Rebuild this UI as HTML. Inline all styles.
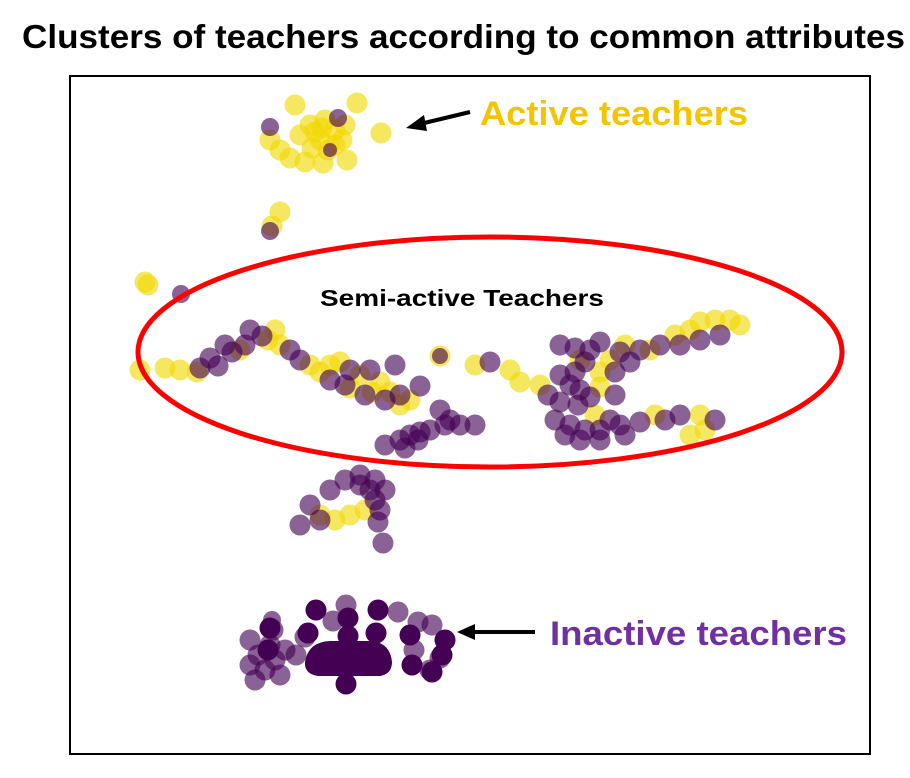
<!DOCTYPE html>
<html><head><meta charset="utf-8"><style>
html,body{margin:0;padding:0;background:#fff;width:910px;height:778px;overflow:hidden;font-family:"Liberation Sans",sans-serif}
</style></head><body>
<svg width="910" height="778" xmlns="http://www.w3.org/2000/svg">
<text x="22" y="48" textLength="883" lengthAdjust="spacingAndGlyphs" font-family="Liberation Sans, sans-serif" font-weight="bold" font-size="33" fill="#000">Clusters of teachers according to common attributes</text>
<rect x="70" y="76" width="800" height="678" fill="none" stroke="#000" stroke-width="2"/>
<g fill-opacity="0.62">
<g fill="#f0d800">
<circle cx="295" cy="105" r="10.5"/><circle cx="357" cy="103" r="10.5"/><circle cx="270" cy="140" r="10.5"/><circle cx="280" cy="150" r="10.5"/><circle cx="290" cy="158" r="10.5"/><circle cx="305" cy="162" r="10.5"/><circle cx="323" cy="163" r="10.5"/><circle cx="347" cy="160" r="10.5"/><circle cx="381" cy="133" r="10.5"/><circle cx="310" cy="125" r="10.5"/><circle cx="325" cy="120" r="10.5"/><circle cx="335" cy="130" r="10.5"/><circle cx="320" cy="140" r="10.5"/><circle cx="335" cy="145" r="10.5"/><circle cx="300" cy="135" r="10.5"/><circle cx="345" cy="125" r="10.5"/><circle cx="315" cy="132" r="10.5"/><circle cx="328" cy="150" r="10.5"/><circle cx="312" cy="148" r="10.5"/><circle cx="342" cy="140" r="10.5"/><circle cx="322" cy="128" r="10.5"/>
<circle cx="280" cy="212" r="10.5"/><circle cx="272" cy="226" r="10.5"/><circle cx="145" cy="282" r="10.5"/><circle cx="148" cy="285" r="10.5"/>
<circle cx="140" cy="370" r="10.5"/><circle cx="165" cy="368" r="10.5"/><circle cx="180" cy="370" r="10.5"/><circle cx="197" cy="372" r="10.5"/><circle cx="275" cy="330" r="10.5"/><circle cx="280" cy="345" r="10.5"/><circle cx="310" cy="365" r="10.5"/><circle cx="320" cy="372" r="10.5"/><circle cx="330" cy="365" r="10.5"/><circle cx="340" cy="362" r="10.5"/><circle cx="360" cy="375" r="10.5"/><circle cx="380" cy="382" r="10.5"/><circle cx="390" cy="392" r="10.5"/><circle cx="410" cy="400" r="10.5"/><circle cx="400" cy="405" r="10.5"/><circle cx="350" cy="388" r="10.5"/><circle cx="268" cy="340" r="10.5"/><circle cx="372" cy="392" r="10.5"/><circle cx="240" cy="350" r="10.5"/>
<circle cx="440" cy="356" r="10.5"/><circle cx="475" cy="365" r="10.5"/><circle cx="510" cy="370" r="10.5"/><circle cx="520" cy="382" r="10.5"/><circle cx="540" cy="385" r="10.5"/>
<circle cx="610" cy="360" r="10.5"/><circle cx="625" cy="345" r="10.5"/><circle cx="650" cy="350" r="10.5"/><circle cx="675" cy="335" r="10.5"/><circle cx="690" cy="330" r="10.5"/><circle cx="700" cy="322" r="10.5"/><circle cx="715" cy="320" r="10.5"/><circle cx="730" cy="320" r="10.5"/><circle cx="740" cy="325" r="10.5"/><circle cx="600" cy="372" r="10.5"/><circle cx="600" cy="387" r="10.5"/><circle cx="655" cy="415" r="10.5"/><circle cx="700" cy="415" r="10.5"/><circle cx="690" cy="435" r="10.5"/><circle cx="705" cy="430" r="10.5"/><circle cx="595" cy="415" r="10.5"/><circle cx="580" cy="360" r="10.5"/>
<circle cx="365" cy="510" r="10.5"/><circle cx="350" cy="515" r="10.5"/><circle cx="335" cy="520" r="10.5"/><circle cx="320" cy="515" r="10.5"/>
</g>
<g fill="#440154">
<circle cx="270" cy="127" r="9"/><circle cx="338" cy="118" r="9"/><circle cx="270" cy="231" r="9"/><circle cx="181" cy="294" r="9"/><circle cx="330" cy="150" r="7"/>
<circle cx="200" cy="368" r="10.5"/><circle cx="210" cy="358" r="10.5"/><circle cx="218" cy="366" r="10.5"/><circle cx="232" cy="352" r="10.5"/><circle cx="245" cy="345" r="10.5"/><circle cx="250" cy="330" r="10.5"/><circle cx="262" cy="336" r="10.5"/><circle cx="290" cy="350" r="10.5"/><circle cx="300" cy="360" r="10.5"/><circle cx="350" cy="370" r="10.5"/><circle cx="345" cy="385" r="10.5"/><circle cx="330" cy="380" r="10.5"/><circle cx="370" cy="370" r="10.5"/><circle cx="395" cy="365" r="10.5"/><circle cx="400" cy="395" r="10.5"/><circle cx="420" cy="386" r="10.5"/><circle cx="365" cy="395" r="10.5"/><circle cx="225" cy="345" r="10.5"/><circle cx="385" cy="400" r="10.5"/>
<circle cx="385" cy="445" r="10.5"/><circle cx="400" cy="440" r="10.5"/><circle cx="410" cy="435" r="10.5"/><circle cx="420" cy="432" r="10.5"/><circle cx="430" cy="430" r="10.5"/><circle cx="445" cy="425" r="10.5"/><circle cx="460" cy="425" r="10.5"/><circle cx="475" cy="425" r="10.5"/><circle cx="440" cy="410" r="10.5"/><circle cx="450" cy="420" r="10.5"/><circle cx="405" cy="448" r="10.5"/><circle cx="418" cy="440" r="10.5"/>
<circle cx="440" cy="356" r="8"/><circle cx="490" cy="362" r="10.5"/><circle cx="548" cy="395" r="10.5"/>
<circle cx="560" cy="345" r="10.5"/><circle cx="575" cy="348" r="10.5"/><circle cx="590" cy="350" r="10.5"/><circle cx="600" cy="342" r="10.5"/><circle cx="640" cy="350" r="10.5"/><circle cx="660" cy="345" r="10.5"/><circle cx="680" cy="345" r="10.5"/><circle cx="700" cy="340" r="10.5"/><circle cx="720" cy="335" r="10.5"/><circle cx="630" cy="362" r="10.5"/><circle cx="615" cy="372" r="10.5"/><circle cx="585" cy="362" r="10.5"/><circle cx="620" cy="352" r="10.5"/>
<circle cx="560" cy="375" r="10.5"/><circle cx="570" cy="385" r="10.5"/><circle cx="580" cy="390" r="10.5"/><circle cx="590" cy="397" r="10.5"/><circle cx="615" cy="395" r="10.5"/><circle cx="560" cy="402" r="10.5"/><circle cx="575" cy="372" r="10.5"/><circle cx="578" cy="405" r="10.5"/>
<circle cx="555" cy="420" r="10.5"/><circle cx="570" cy="425" r="10.5"/><circle cx="585" cy="430" r="10.5"/><circle cx="600" cy="430" r="10.5"/><circle cx="620" cy="425" r="10.5"/><circle cx="640" cy="422" r="10.5"/><circle cx="665" cy="420" r="10.5"/><circle cx="680" cy="415" r="10.5"/><circle cx="715" cy="420" r="10.5"/><circle cx="600" cy="440" r="10.5"/><circle cx="580" cy="440" r="10.5"/><circle cx="565" cy="435" r="10.5"/><circle cx="625" cy="435" r="10.5"/><circle cx="610" cy="420" r="10.5"/>
<circle cx="330" cy="490" r="10.5"/><circle cx="345" cy="480" r="10.5"/><circle cx="360" cy="485" r="10.5"/><circle cx="375" cy="480" r="10.5"/><circle cx="385" cy="490" r="10.5"/><circle cx="375" cy="500" r="10.5"/><circle cx="380" cy="510" r="10.5"/><circle cx="310" cy="505" r="10.5"/><circle cx="300" cy="525" r="10.5"/><circle cx="320" cy="520" r="10.5"/><circle cx="378" cy="522" r="10.5"/><circle cx="383" cy="543" r="10.5"/><circle cx="360" cy="475" r="10.5"/><circle cx="370" cy="490" r="10.5"/>
<circle cx="250" cy="640" r="10.5"/><circle cx="258" cy="655" r="10.5"/><circle cx="250" cy="665" r="10.5"/><circle cx="265" cy="670" r="10.5"/><circle cx="275" cy="660" r="10.5"/><circle cx="270" cy="645" r="10.5"/><circle cx="285" cy="650" r="10.5"/><circle cx="273" cy="630" r="10.5"/><circle cx="272" cy="620" r="9"/><circle cx="255" cy="680" r="10.5"/><circle cx="280" cy="675" r="10.5"/>
<circle cx="346" cy="605" r="10.5"/><circle cx="398" cy="612" r="10.5"/><circle cx="333" cy="621" r="10.5"/><circle cx="418" cy="622" r="10.5"/><circle cx="432" cy="625" r="10.5"/><circle cx="430" cy="670" r="10.5"/><circle cx="440" cy="658" r="10.5"/><circle cx="414" cy="650" r="10.5"/><circle cx="305" cy="637" r="10.5"/><circle cx="296" cy="655" r="10.5"/>
</g>
</g>
<g fill="#440154">
<circle cx="316" cy="610" r="10.5"/><circle cx="378" cy="610" r="10.5"/><circle cx="308" cy="633" r="10.5"/><circle cx="376" cy="633" r="10.5"/><circle cx="348" cy="618" r="10.5"/><circle cx="348" cy="636" r="10.5"/><circle cx="346" cy="684" r="10.5"/><circle cx="410" cy="635" r="10.5"/><circle cx="412" cy="665" r="10.5"/><circle cx="445" cy="640" r="10.5"/><circle cx="442" cy="655" r="10.5"/><circle cx="432" cy="672" r="10.5"/><circle cx="270" cy="628" r="10.5"/><circle cx="268" cy="650" r="10.5"/>
<path d="M305 662 Q308 642 330 641 L370 641 Q390 642 392 662 Q392 674 380 676 L318 676 Q304 674 305 662 Z"/>
</g>
<ellipse cx="490" cy="352" rx="352" ry="115" fill="none" stroke="#f00" stroke-width="5"/>
<text x="320" y="306" textLength="284" lengthAdjust="spacingAndGlyphs" font-family="Liberation Sans, sans-serif" font-weight="bold" font-size="23" fill="#000">Semi-active Teachers</text>
<text x="480" y="125" textLength="268" lengthAdjust="spacingAndGlyphs" font-family="Liberation Sans, sans-serif" font-weight="bold" font-size="34" fill="#f5c400">Active teachers</text>
<text x="550" y="645" textLength="297" lengthAdjust="spacingAndGlyphs" font-family="Liberation Sans, sans-serif" font-weight="bold" font-size="34" fill="#7030a0">Inactive teachers</text>
<line x1="470" y1="112" x2="420" y2="124" stroke="#000" stroke-width="4"/>
<polygon points="406,128 424,115 427,131" fill="#000"/>
<line x1="535" y1="632" x2="472" y2="632" stroke="#000" stroke-width="4"/>
<polygon points="457,632 475,624 475,640" fill="#000"/>
</svg>
</body></html>
